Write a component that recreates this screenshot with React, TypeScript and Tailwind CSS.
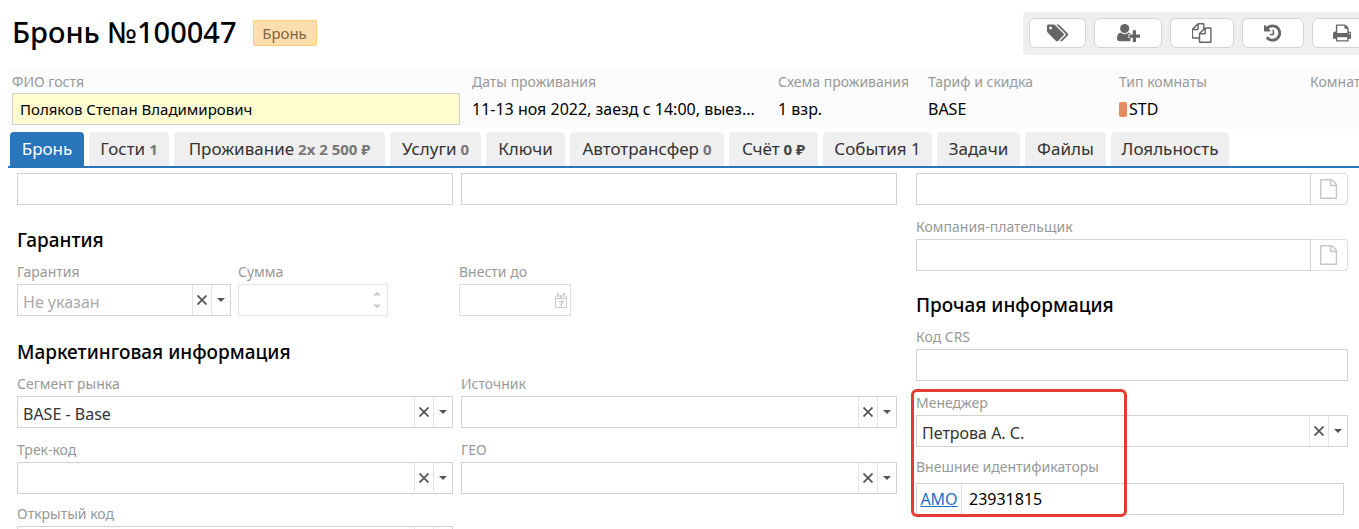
import type { ReactNode } from 'react';

const TAGS =
  'M448 448q0-53-37.5-90.5t-90.5-37.5-90.5 37.5-37.5 90.5 37.5 90.5 90.5 37.5 90.5-37.5 37.5-90.5zm1067 576q0 53-37 90l-491 492q-39 37-91 37-53 0-90-37l-715-716q-38-37-64.5-101t-26.5-117v-416q0-52 38-90t90-38h416q53 0 117 26.5t102 64.5l715 714q37 39 37 91zm384 0q0 53-37 90l-491 492q-39 37-91 37-36 0-59-14t-53-45l470-470q37-37 37-90 0-52-37-91l-715-714q-38-38-102-64.5t-117-26.5h224q53 0 117 26.5t102 64.5l715 714q37 39 37 91z';
const COPY =
  'M1664 384q40 0 68 28t28 68v1216q0 40-28 68t-68 28h-960q-40 0-68-28t-28-68v-288h-544q-40 0-68-28t-28-68v-672q0-40 20-88t48-76l408-408q28-28 76-48t88-20h416q40 0 68 28t28 68v328q68-40 128-40h416zm-544 213l-299 299h299v-299zm-640-384l-299 299h299v-299zm196 647l316-316v-416h-384v416q0 40-28 68t-68 28h-416v640h512v-256q0-40 20-88t48-76zm956 804v-1152h-384v416q0 40-28 68t-68 28h-416v640h896z';
const HISTORY =
  'M1536 896q0 156-61 298t-164 245-245 164-298 61q-172 0-327-72.5t-264-204.5q-7-10-6.5-22.5t8.5-20.5l137-138q10-9 25-9 16 2 23 12 73 95 179 147t225 52q104 0 198.5-40.5t163.5-109.5 109.5-163.5 40.5-198.5-40.5-198.5-109.5-163.5-163.5-109.5-198.5-40.5q-98 0-188 35.5t-160 101.5l137 138q31 30 14 69-17 40-59 40h-448q-26 0-45-19t-19-45v-448q0-42 40-59 39-17 69 14l130 129q107-101 244.5-156.5t284.5-55.5q156 0 298 61t245 164 164 245 61 298zm-640-288v448q0 14-9 23t-23 9h-320q-14 0-23-9t-9-23v-64q0-14 9-23t23-9h224v-352q0-14 9-23t23-9h64q14 0 23 9t9 23z';
const PRINT =
  'M384 1536h896v-256h-896v256zm0-640h896v-384h-160q-40 0-68-28t-28-68v-160h-640v640zm1152 64q0-26-19-45t-45-19-45 19-19 45 19 45 45 19 45-19 19-45zm128 0v416q0 13-9.5 22.5t-22.5 9.5h-224v160q0 40-28 68t-68 28h-960q-40 0-68-28t-28-68v-160h-224q-13 0-22.5-9.5t-9.5-22.5v-416q0-79 56.5-135.5t135.5-56.5h64v-544q0-40 28-68t68-28h672q40 0 88 20t76 48l152 152q28 28 48 76t20 88v256h64q79 0 135.5 56.5t56.5 135.5z';
const FILE =
  'M1468 380q28 28 48 76t20 88v1152q0 40-28 68t-68 28h-1344q-40 0-68-28t-28-68v-1600q0-40 28-68t68-28h896q40 0 88 20t76 48zm-444-244v376h376q-10-29-22-41l-313-313q-12-12-41-22zm384 1528v-1024h-416q-40 0-68-28t-28-68v-416h-768v1536h1280z';

function Glyph({ d, box }: { d: string; box: number }) {
  return (
    <svg viewBox={`0 0 ${box} 1792`} className="h-5 fill-current" aria-hidden="true">
      <path d={d} />
    </svg>
  );
}

function UserPlus() {
  return (
    <svg viewBox="0 0 23 20" className="h-5 fill-current" aria-hidden="true">
      <circle cx="7.7" cy="5.6" r="4.6" />
      <path d="M3.600 9.600C1.200 10 0 12.500 0 15.600C0 17.300 1 18.300 2.800 18.300H13.500V15H11.500V11H13.300C12.900 10.200 12.400 9.700 11.700 9.600C9.300 11.700 6 11.700 3.600 9.600z" />
      <path d="M15.800 7.200h3.200v4.300h4v3.200h-4v4.300h-3.200v-4.300h-3.500v-3.200h3.500z" />
    </svg>
  );
}

const tools = [
  { label: 'Метки', icon: <Glyph d={TAGS} box={1899} />, width: 'w-[57px]' },
  { label: 'Добавить гостя', icon: <UserPlus />, width: 'w-[68px]' },
  { label: 'Копировать', icon: <Glyph d={COPY} box={1792} />, width: 'w-16' },
  { label: 'История', icon: <Glyph d={HISTORY} box={1536} />, width: 'w-[62px]' },
  { label: 'Печать', icon: <Glyph d={PRINT} box={1664} />, width: 'w-[60px]' },
];

const tabs = [
  { label: 'Бронь', width: 'w-[74px]', active: true },
  { label: 'Гости', count: '1', width: 'w-20' },
  { label: 'Проживание', count: '2x 2 500 ₽', width: 'w-[211px]' },
  { label: 'Услуги', count: '0', width: 'w-[91px]' },
  { label: 'Ключи', width: 'w-[79px]' },
  { label: 'Автотрансфер', count: '0', width: 'w-[154px]' },
  { label: 'Счёт', count: '0 ₽', width: 'w-[89px]', dark: true },
  { label: 'События 1', width: 'w-[109px]' },
  { label: 'Задачи', width: 'w-[83px]' },
  { label: 'Файлы', width: 'w-[81px]' },
  { label: 'Лояльность', width: 'w-[118px]' },
];

function Label({ id, children }: { id: string; children: ReactNode }) {
  return (
    <label htmlFor={id} className="mb-0.5 block text-sm leading-5 whitespace-nowrap text-[#999]">
      {children}
    </label>
  );
}

function Heading({ children }: { children: ReactNode }) {
  return <h2 className="mb-2 text-[19px] leading-7 font-medium text-black">{children}</h2>;
}

function TextField({ id, label }: { id: string; label?: string }) {
  return (
    <div className="flex flex-col justify-end">
      {label && <Label id={id}>{label}</Label>}
      <input
        id={id}
        aria-label={label ? undefined : id}
        className="block h-8 w-full border border-[#d2d2d2] px-[7px] text-base outline-none"
      />
    </div>
  );
}

function LookupField({ id, label }: { id: string; label?: string }) {
  return (
    <div>
      {label && <Label id={id}>{label}</Label>}
      <div className="flex h-8">
        <input
          id={id}
          aria-label={label ? undefined : id}
          className="min-w-0 flex-1 border border-[#d2d2d2] px-[7px] text-base outline-none"
        />
        <button
          type="button"
          aria-label="Открыть карточку"
          className="flex w-[37px] items-center justify-center rounded-r border border-l-0 border-[#dedede] text-[#c6c6c6]"
        >
          <Glyph d={FILE} box={1536} />
        </button>
      </div>
    </div>
  );
}

function ComboField({ id, label, value = '', muted = false }: { id: string; label: string; value?: string; muted?: boolean }) {
  return (
    <div>
      <Label id={id}>{label}</Label>
      <div className="flex h-8 border border-[#d2d2d2]">
        <select
          id={id}
          className={`min-w-0 flex-1 appearance-none px-[5px] pt-1 text-base leading-6 outline-none ${
            muted ? 'text-[#aaa]' : 'text-[#333]'
          }`}
        >
          <option>{value}</option>
        </select>
        <button
          type="button"
          aria-label="Очистить"
          className="flex w-[19px] items-center justify-center border-l border-[#e4e4e4] text-[#555]"
        >
          <svg viewBox="0 0 10 10" className="size-[10px]" aria-hidden="true">
            <path d="M0.500 0.500l9 9M9.500 0.500l-9 9" stroke="currentColor" strokeWidth="1.800" fill="none" />
          </svg>
        </button>
        <button
          type="button"
          aria-label="Показать список"
          className="flex w-[19px] items-center justify-center border-l border-[#e4e4e4] text-[#555]"
        >
          <svg viewBox="0 0 8 4" className="h-1 w-2 fill-current" aria-hidden="true">
            <path d="M0 0h8L4 4z" />
          </svg>
        </button>
      </div>
    </div>
  );
}

function Fact({ label, width, children }: { label: string; width: string; children?: ReactNode }) {
  return (
    <div className={width}>
      <div className="text-sm leading-6 whitespace-nowrap text-[#999]">{label}</div>
      <div className="flex h-[30px] items-center text-base whitespace-nowrap text-black">{children}</div>
    </div>
  );
}

export default function App() {
  return (
    <div className="flex h-screen flex-col overflow-hidden bg-white font-['Noto_Sans','Open_Sans',sans-serif]">
      <header className="flex h-[70px] shrink-0 items-start pl-3">
        <h1 className="mt-3 text-[29px] leading-10 font-medium whitespace-nowrap text-black">Бронь №100047</h1>
        <span className="mt-5 ml-4 flex h-[26px] w-16 items-center justify-center rounded-xs border border-[#fc7] bg-[#ffdead] text-[15px] text-[#7d6545]">
          Бронь
        </span>
        <div className="mt-3 ml-auto flex h-[43px] w-[336px] gap-2 overflow-hidden rounded-l bg-[#efefef] pt-1.5 pl-1.5">
          {tools.map((tool) => (
            <button
              key={tool.label}
              type="button"
              aria-label={tool.label}
              className={`flex h-[30px] shrink-0 items-center justify-center rounded-md border border-[#d4d4d4] bg-white text-[#666] ${tool.width}`}
            >
              {tool.icon}
            </button>
          ))}
        </div>
      </header>

      <section className="ml-2 flex h-[59px] shrink-0 overflow-hidden bg-[#fcfcfc] pl-1">
        <div className="w-[460px] shrink-0">
          <label htmlFor="guest" className="block h-[23px] text-sm leading-6 text-[#999]">
            ФИО гостя
          </label>
          <input
            id="guest"
            defaultValue="Поляков Степан Владимирович"
            className="block h-8 w-[448px] border border-[#d2d2d2] bg-[#fffcd0] px-[7px] text-[15px] text-black outline-none"
          />
        </div>
        <Fact label="Даты проживания" width="w-[306px] shrink-0">
          11-13 ноя 2022, заезд с 14:00, выез...
        </Fact>
        <Fact label="Схема проживания" width="w-[150px] shrink-0">
          1 взр.
        </Fact>
        <Fact label="Тариф и скидка" width="w-[191px] shrink-0">
          BASE
        </Fact>
        <Fact label="Тип комнаты" width="w-[191px] shrink-0">
          <span className="mr-0.5 h-[15px] w-2 rounded-xs bg-[#e98b60]" />
          STD
        </Fact>
        <Fact label="Комната" width="w-20 shrink-0" />
      </section>

      <nav className="mt-[3px] ml-2 flex h-9 shrink-0 gap-[5px] border-b-2 border-[#2875bb] pl-0.5">
        {tabs.map((tab) => (
          <button
            key={tab.label}
            type="button"
            className={`flex shrink-0 items-center justify-center gap-1 rounded-t text-[17px] whitespace-nowrap ${tab.width} ${
              tab.active ? 'bg-[#2875bb] text-white' : 'bg-[#efefef] text-[#333]'
            }`}
          >
            {tab.label}
            {tab.count && (
              <span className={tab.dark ? 'text-[15px] font-bold text-[#444]' : 'text-[15px] font-bold text-[#777]'}>
                {tab.count}
              </span>
            )}
          </button>
        ))}
      </nav>

      <main className="min-h-0 flex-1 overflow-hidden">
        <form className="flex gap-[19px] pt-[5px] pr-[11px] pl-[17px]">
          <div className="min-w-0 flex-[880]">
            <div className="grid grid-cols-2 gap-2">
              <TextField id="phone" />
              <TextField id="email" />
            </div>

            <div className="mt-[21px]">
              <Heading>Гарантия</Heading>
              <div className="flex gap-[7px]">
                <div className="w-[214px]">
                  <ComboField id="guarantee" label="Гарантия" value="Не указан" muted />
                </div>
                <div className="w-[150px]">
                  <Label id="amount">Сумма</Label>
                  <div className="flex h-8 items-center border border-[#e6e6e6] pr-1.5">
                    <input id="amount" disabled className="min-w-0 flex-1 px-[5px] text-base" />
                    <svg viewBox="0 0 8 18" className="h-[18px] w-2 fill-[#ccc]" aria-hidden="true">
                      <path d="M0 4.500L4 0.500l4 4zM0 13.500h8l-4 4z" />
                    </svg>
                  </div>
                </div>
                <div className="ml-16 w-28">
                  <Label id="due">Внести до</Label>
                  <div className="flex h-8 items-center border border-[#dedede] pr-[3px]">
                    <input id="due" disabled className="min-w-0 flex-1 px-[5px] text-base" />
                    <svg viewBox="0 0 12 15" className="h-[15px] w-3" fill="none" stroke="#ccc" aria-hidden="true">
                      <path d="M0.500 3v11.500h11V3M0 5.500h12" />
                      <path d="M3 0v4M9 0v4M6 2v3" strokeWidth="2" />
                      <path d="M4 8.500h4L5.500 13" strokeWidth="1.500" />
                    </svg>
                  </div>
                </div>
              </div>
            </div>

            <div className="mt-[22px]">
              <Heading>Маркетинговая информация</Heading>
              <div className="grid grid-cols-2 gap-x-2 gap-y-3">
                <ComboField id="segment" label="Сегмент рынка" value="BASE - Base" />
                <ComboField id="source" label="Источник" />
                <ComboField id="track" label="Трек-код" />
                <ComboField id="geo" label="ГЕО" />
              </div>
              <div className="mt-2.5 grid grid-cols-2 gap-x-2">
                <ComboField id="open-code" label="Открытый код" />
              </div>
            </div>
          </div>

          <div className="min-w-0 flex-[432]">
            <LookupField id="company" />
            <div className="mt-3">
              <LookupField id="payer" label="Компания-плательщик" />
            </div>
            <div className="mt-5">
              <Heading>Прочая информация</Heading>
              <TextField id="crs" label="Код CRS" />
            </div>
            <div className="relative mt-3">
              <ComboField id="manager" label="Менеджер" value="Петрова А. С." />
              <div className="mt-2.5 mr-1">
                <label htmlFor="external" className="mb-1.5 block text-sm leading-5 text-[#999]">
                  Внешние идентификаторы
                </label>
                <div className="flex h-8 items-center border border-[#d2d2d2]">
                  <a
                    href="#amo"
                    className="flex h-full w-[45px] items-center justify-center border-r border-[#dedede] text-base text-[#1a6fc9] underline"
                  >
                    AMO
                  </a>
                  <input
                    id="external"
                    defaultValue="23931815"
                    className="h-full min-w-0 flex-1 px-[7px] text-base text-black outline-none"
                  />
                </div>
              </div>
              <div className="pointer-events-none absolute -top-1 -left-[5px] h-32 w-[216px] rounded-md border-3 border-[#e53a32]" />
            </div>
          </div>
        </form>
      </main>
    </div>
  );
}
